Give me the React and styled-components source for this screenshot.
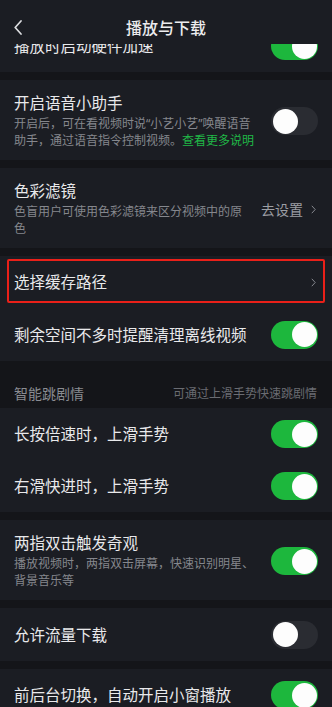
import styled, { createGlobalStyle } from "styled-components"

const Global = createGlobalStyle`
  html, body {
    margin: 0;
    padding: 0;
    background: #141519;
    overflow: hidden;
  }
  body {
    font-family: "Noto Sans", "Noto Sans CJK SC", sans-serif;
  }
`

const Page = styled.div`
  width: 332px;
  height: 707px;
  overflow: hidden;
  background: #141519;
  display: flex;
  flex-direction: column;
`

const Header = styled.div`
  flex: none;
  height: 44px;
  background: #1b1d23;
  display: grid;
  grid-template-columns: 40px 1fr 40px;
  align-items: center;
  position: relative;
  z-index: 1;
`

const Back = styled.div`
  display: flex;
  align-items: center;
  padding-left: 14px;
  padding-top: 10px;
`

const HeaderTitle = styled.div`
  text-align: center;
  color: #ececee;
  font-size: 16px;
  font-weight: 500;
  padding-top: 10px;
`

const List = styled.div`
  flex: 1;
  overflow: hidden;
`

const Group = styled.div`
  background: #1b1d23;
  margin-top: ${(p) => p.$offset || 0}px;
  margin-bottom: 8px;
`

const Row = styled.div`
  position: relative;
  display: flex;
  align-items: center;
  gap: 14px;
  min-height: ${(p) => p.$h || 52}px;
  padding: ${(p) => (p.$tall ? "13px 14px 11px" : "0 14px")};
  box-sizing: border-box;
`

const Text = styled.div`
  flex: 1;
  min-width: 0;
`

const Title = styled.div`
  color: #e9e9eb;
  font-size: 15.5px;
  line-height: 20px;
`

const Desc = styled.div`
  color: #85878d;
  font-size: 12px;
  line-height: 17px;
  margin-top: 2px;
`

const Link = styled.span`
  color: #20b847;
`

const Toggle = styled.span`
  flex: none;
  position: relative;
  width: 47px;
  height: 28px;
  border-radius: 14px;
  background: ${(p) => (p.$on ? "#1db73d" : "#2a2c32")};
  &::after {
    content: "";
    position: absolute;
    top: 1.5px;
    left: ${(p) => (p.$on ? "20.5px" : "1.5px")};
    width: 25px;
    height: 25px;
    border-radius: 50%;
    background: #fdfdfd;
  }
`

const Side = styled.div`
  flex: none;
  display: flex;
  align-items: center;
  gap: 8px;
  color: #9c9ea4;
  font-size: 14px;
  padding-right: 2px;
`

const Highlight = styled.div`
  position: absolute;
  left: 7px;
  right: 7px;
  top: 3px;
  bottom: 5px;
  border: 2px solid #ea2019;
  border-radius: 2px;
  pointer-events: none;
`

const SectionHead = styled.div`
  display: flex;
  justify-content: space-between;
  align-items: center;
  padding: 24px 15px 7px 14px;
  height: 16px;
  margin-top: -8px;
  margin-bottom: 0;
`

const SectionTitle = styled.span`
  color: #8a8c92;
  font-size: 14px;
`

const SectionHint = styled.span`
  color: #6a6c72;
  font-size: 12px;
`

const Chevron = () => (
  <svg width="5" height="9" viewBox="0 0 5 9">
    <polyline points="0.8,0.8 4.2,4.5 0.8,8.2" fill="none" stroke="#85878d" strokeWidth="1" />
  </svg>
)

const BackIcon = () => (
  <svg width="8" height="15" viewBox="0 0 8 15">
    <polyline points="7,1 1.2,7.5 7,14" fill="none" stroke="#dcdde0" strokeWidth="1.7" strokeLinecap="round" strokeLinejoin="round" />
  </svg>
)

export default function App() {
  return (
    <Page>
      <Global />
      <Header>
        <Back>
          <BackIcon />
        </Back>
        <HeaderTitle>播放与下载</HeaderTitle>
        <div />
      </Header>
      <List>
        <Group $offset={-24}>
          <Row>
            <Text>
              <Title>播放时启动硬件加速</Title>
            </Text>
            <Toggle $on />
          </Row>
        </Group>
        <Group>
          <Row $tall $h={80}>
            <Text>
              <Title>开启语音小助手</Title>
              <Desc>
                开启后，可在看视频时说“小艺小艺”唤醒语音助手，通过语音指令控制视频。
                <Link>查看更多说明</Link>
              </Desc>
            </Text>
            <Toggle />
          </Row>
        </Group>
        <Group>
          <Row $tall $h={80}>
            <Text>
              <Title>色彩滤镜</Title>
              <Desc>色盲用户可使用色彩滤镜来区分视频中的原色</Desc>
            </Text>
            <Side>
              去设置
              <Chevron />
            </Side>
          </Row>
        </Group>
        <Group>
          <Row>
            <Text>
              <Title>选择缓存路径</Title>
            </Text>
            <Side>
              <Chevron />
            </Side>
            <Highlight />
          </Row>
          <Row $h={53}>
            <Text>
              <Title>剩余空间不多时提醒清理离线视频</Title>
            </Text>
            <Toggle $on />
          </Row>
        </Group>
        <SectionHead>
          <SectionTitle>智能跳剧情</SectionTitle>
          <SectionHint>可通过上滑手势快速跳剧情</SectionHint>
        </SectionHead>
        <Group>
          <Row>
            <Text>
              <Title>长按倍速时，上滑手势</Title>
            </Text>
            <Toggle $on />
          </Row>
          <Row>
            <Text>
              <Title>右滑快进时，上滑手势</Title>
            </Text>
            <Toggle $on />
          </Row>
        </Group>
        <Group>
          <Row $tall $h={80}>
            <Text>
              <Title>两指双击触发奇观</Title>
              <Desc>播放视频时，两指双击屏幕，快速识别明星、背景音乐等</Desc>
            </Text>
            <Toggle $on />
          </Row>
        </Group>
        <Group>
          <Row $h={53}>
            <Text>
              <Title>允许流量下载</Title>
            </Text>
            <Toggle />
          </Row>
        </Group>
        <Group>
          <Row>
            <Text>
              <Title>前后台切换，自动开启小窗播放</Title>
            </Text>
            <Toggle $on />
          </Row>
        </Group>
      </List>
    </Page>
  )
}
